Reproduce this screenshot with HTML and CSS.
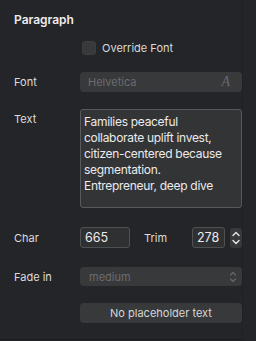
FILE: index.html
```html
<!DOCTYPE html>
<html>
<head>
<meta charset="utf-8">
<link rel="stylesheet" href="styles.css">
</head>
<body>
<div class="panel">
  <div class="title">Paragraph</div>
  <div class="row check-row">
    <div class="label"></div>
    <div class="ctrl check-ctrl"><span class="checkbox"></span><span class="check-label">Override Font</span></div>
  </div>
  <div class="row font-row">
    <div class="label">Font</div>
    <div class="ctrl field disabled"><span class="ph">Helvetica</span><span class="font-icon">A</span></div>
  </div>
  <div class="row text-row">
    <div class="label">Text</div>
    <div class="ctrl textarea">Families peaceful collaborate uplift invest, citizen-centered because segmentation.<br>Entrepreneur, deep dive</div>
  </div>
  <div class="row char-row">
    <div class="label">Char</div>
    <div class="ctrl num-ctrl">
      <div class="num num-wide">665</div>
      <div class="trim-label">Trim</div>
      <div class="num num-narrow">278</div>
      <div class="stepper">
        <svg width="12" height="20" viewBox="0 0 12 20"><path d="M3 7.5 L6 4.5 L9 7.5" fill="none" stroke="#e6e6e6" stroke-width="1.4" stroke-linecap="round" stroke-linejoin="round"/><path d="M3 12.5 L6 15.5 L9 12.5" fill="none" stroke="#e6e6e6" stroke-width="1.4" stroke-linecap="round" stroke-linejoin="round"/></svg>
      </div>
    </div>
  </div>
  <div class="row fade-row">
    <div class="label">Fade in</div>
    <div class="ctrl field disabled select"><span class="ph">medium</span>
      <svg class="chev" width="8" height="14" viewBox="0 0 8 14"><path d="M1.5 5 L4 2.5 L6.5 5" fill="none" stroke="#66676a" stroke-width="1.2" stroke-linecap="round" stroke-linejoin="round"/><path d="M1.5 9 L4 11.5 L6.5 9" fill="none" stroke="#66676a" stroke-width="1.2" stroke-linecap="round" stroke-linejoin="round"/></svg>
    </div>
  </div>
  <div class="row btn-row">
    <div class="label"></div>
    <div class="ctrl button">No placeholder text</div>
  </div>
</div>
</body>
</html>
```
FILE: styles.css
```css
html, body {
  margin: 0;
  padding: 0;
  background: #242528;
}
body {
  width: 256px;
  height: 341px;
  overflow: hidden;
  font-family: Inter, "Liberation Sans", sans-serif;
  color: #e2e2e3;
  font-size: 11px;
}
.panel {
  height: 340px;
  width: 243px;
  padding-left: 14px;
  box-sizing: border-box;
  border-bottom: 1px solid #1a1b1d;
  border-right: 1px solid #202124;
}
.title {
  padding-top: 12px;
  font-size: 12px;
  font-weight: 600;
  line-height: 16px;
  color: #ececed;
}
.row {
  display: flex;
  align-items: center;
}
.label {
  width: 66px;
  flex: none;
  font-size: 11px;
  color: #dcdcdd;
}
.ctrl {
  width: 162px;
  flex: none;
  box-sizing: border-box;
}
.check-row { margin-top: 13px; height: 14px; }
.check-ctrl { display: flex; align-items: center; padding-left: 2px; }
.checkbox {
  width: 14px; height: 14px;
  border-radius: 3px;
  background: #38393b;
  box-sizing: border-box;
  border: 1px solid #3d3e40;
}
.check-label { margin-left: 6px; color: #d9d9da; }
.font-row { margin-top: 17px; }
.field {
  height: 20px;
  border-radius: 4px;
  display: flex;
  align-items: center;
  padding: 0 8px;
}
.disabled { background: #38393b; }
.ph { color: #6b6c6f; flex: 1; }
.font-icon {
  font-family: "Liberation Serif", serif;
  font-style: italic;
  font-size: 14px;
  color: #67686b;
  margin-right: 4px;
}
.text-row { margin-top: 17px; align-items: flex-start; }
.text-row .label { padding-top: 3px; line-height: 14px; }
.textarea {
  height: 99px;
  border: 1px solid #58595b;
  border-radius: 3px;
  background: #333436;
  padding: 4px 3px 0 3px;
  line-height: 16px;
  font-size: 12px;
  letter-spacing: -0.3px;
  color: #ebebec;
}
.char-row { margin-top: 19px; }
.num-ctrl { display: flex; align-items: center; }
.num {
  height: 21px;
  box-sizing: border-box;
  border: 1px solid #4f5052;
  border-radius: 3px;
  background: #2f3032;
  padding: 0 4px;
  display: flex;
  align-items: center;
  color: #ececed;
  font-size: 12.5px;
}
.num-wide { width: 50px; }
.trim-label { margin-left: 14px; width: 48px; color: #dcdcdd; }
.num-narrow { width: 33px; }
.stepper {
  margin-left: 5px;
  width: 12px; height: 20px;
  border-radius: 3px;
  background: #38393b;
  display: flex;
}
.fade-row { margin-top: 19px; }
.select { height: 19px; padding-left: 9px; padding-right: 5px; }
.btn-row { margin-top: 17px; }
.button {
  height: 20px;
  border-radius: 4px;
  background: #38393b;
  display: flex;
  align-items: center;
  justify-content: center;
  color: #d6d6d7;
}
```
